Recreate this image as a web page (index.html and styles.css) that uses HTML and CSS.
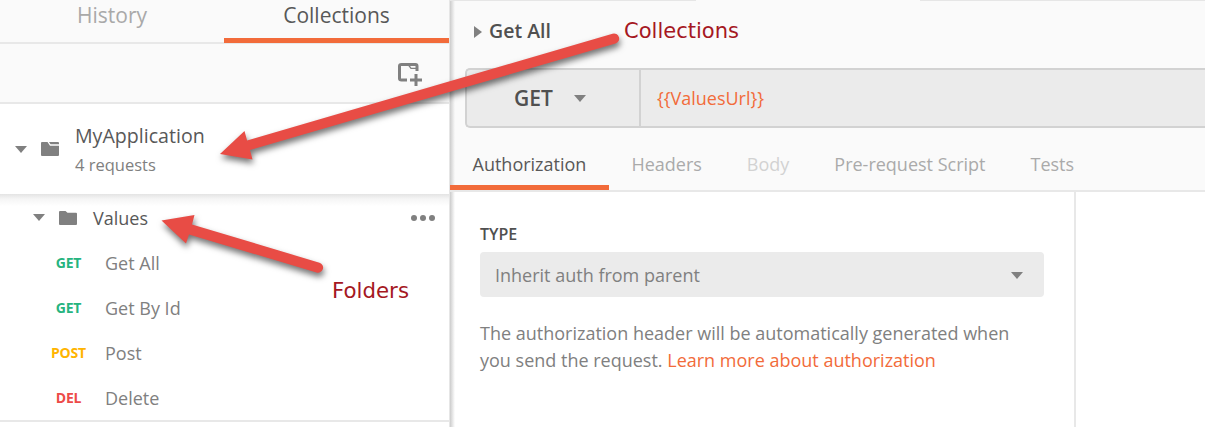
FILE: index.html
```
<!DOCTYPE html>
<html lang="en">
<head>
<meta charset="utf-8">
<title>Collections</title>
<link rel="stylesheet" href="styles.css">
</head>
<body>
<div class="app">
  <aside class="sidebar">
    <nav class="side-tabs">
      <div class="side-tab"><span>History</span></div>
      <div class="side-tab active"><span>Collections</span></div>
    </nav>
    <div class="toolbar">
      <svg width="24" height="24" viewBox="0 0 24 24" fill="none" stroke="#808080">
        <path stroke-width="3" d="M9 18H3.500Q1.500 18 1.500 16.500V4Q1.500 2.500 3.500 2.500H17.500Q19 2.500 19 4V9"/>
        <path stroke-width="1.300" d="M10.500 3L13 6.300H19"/>
        <path stroke-width="3" d="M12 18H24M18 12V24"/>
      </svg>
    </div>
    <div class="collection">
      <svg class="caret" width="12" height="7" viewBox="0 0 12 7"><path d="M0 0H12L6 7Z"/></svg>
      <svg class="folder" width="18" height="14" viewBox="0 0 18 14"><path d="M1 0H6.500L9 3.800H18V13Q18 14 17 14H1Q0 14 0 13V1Q0 0 1 0ZM8 0H17Q18 0 18 1V2.300H9.500Z"/></svg>
      <div class="collection-text">
        <div class="collection-name"><span>MyApplication</span></div>
        <div class="collection-count"><span>4 requests</span></div>
      </div>
    </div>
    <div class="tree">
      <div class="folder-row">
        <svg class="caret" width="12" height="7" viewBox="0 0 12 7"><path d="M0 0H12L6 7Z"/></svg>
        <svg class="folder" width="18" height="14" viewBox="0 0 18 14"><path d="M1 0H6.500L8.500 1.800H17Q18 1.800 18 2.800V13Q18 14 17 14H1Q0 14 0 13V1Q0 0 1 0Z"/></svg>
        <span class="folder-name">Values</span>
        <svg class="dots" width="24" height="6" viewBox="0 0 24 6"><circle cx="3" cy="3" r="3"/><circle cx="12" cy="3" r="3"/><circle cx="21" cy="3" r="3"/></svg>
      </div>
      <div class="request"><span class="method get">GET</span><span>Get All</span></div>
      <div class="request"><span class="method get">GET</span><span>Get By Id</span></div>
      <div class="request"><span class="method post">POST</span><span>Post</span></div>
      <div class="request"><span class="method del">DEL</span><span>Delete</span></div>
    </div>
  </aside>
  <main class="main">
    <div class="tab-edge"><i class="edge-left"></i><i class="edge-right"></i></div>
    <div class="title">
      <svg class="caret" width="8" height="12" viewBox="0 0 8 12"><path d="M0 0V12L8 6Z"/></svg>
      <span>Get All</span>
    </div>
    <div class="url-bar">
      <div class="verb"><span>GET</span><svg class="caret" width="12" height="7" viewBox="0 0 12 7"><path d="M0 0H12L6 7Z"/></svg></div>
      <div class="url"><span>{{ValuesUrl}}</span></div>
    </div>
    <nav class="req-tabs">
      <div class="req-tab active"><span>Authorization</span></div>
      <div class="req-tab"><span>Headers</span></div>
      <div class="req-tab disabled"><span>Body</span></div>
      <div class="req-tab"><span>Pre-request Script</span></div>
      <div class="req-tab"><span>Tests</span></div>
    </nav>
    <div class="content">
      <section class="auth">
        <div class="type-label">TYPE</div>
        <div class="select"><span>Inherit auth from parent</span><svg class="caret" width="12" height="7" viewBox="0 0 12 7"><path d="M0 0H12L6 7Z"/></svg></div>
        <p class="note">The authorization header will be automatically generated when<br>you send the request. <a>Learn more about authorization</a></p>
      </section>
    </div>
  </main>
  <svg class="annotations" width="1205" height="427" viewBox="0 0 1205 427">
    <g class="arrow">
      <path d="M220 154L244.500 131L247.100 140.400L612.500 33.700A5 5 0 0 1 615.500 43.600L250 150L252.500 159.500Z"/>
      <path d="M161.500 220.500L194.500 215L192 224.500L319.500 262.700A5 5 0 0 1 316.500 272.500L189 234.500L186 243.500Z"/>
    </g>
    <g class="callout">
      <text x="624" y="38" textLength="115" lengthAdjust="spacingAndGlyphs">Collections</text>
      <text x="332" y="298" textLength="77" lengthAdjust="spacingAndGlyphs">Folders</text>
    </g>
  </svg>
</div>
</body>
</html>
```
FILE: styles.css
```
* { box-sizing: border-box; }
body { margin: 0; font-family: "Open Sans", sans-serif; font-size: 18px; color: #808080; }
svg { display: block; flex: none; }
.app { position: relative; display: flex; width: 1205px; height: 427px; overflow: hidden; background: #fff; white-space: nowrap; }
.caret, .folder, .dots { fill: #808080; }

.sidebar { width: 450px; flex: none; border-right: 1px solid #e6e6e6; }
.side-tabs { display: flex; height: 44px; background: #fafafa; border-bottom: 2px solid #e8e8e8; }
.side-tab { width: 224px; height: 43px; padding-top: 1px; line-height: 28px; font-size: 21px; text-align: center; color: #a9a9a9; }
.side-tab.active { width: 225px; color: #585858; border-bottom: 5px solid #f26b3a; }
.toolbar { height: 60px; padding: 18px 27px 0 0; display: flex; justify-content: flex-end; background: #fafafa; border-bottom: 2px solid #e8e8e8; }
.collection { height: 90px; display: flex; align-items: center; padding-left: 15px; }
.collection .folder { margin: 0 16px 0 14px; }
.collection-text { padding-top: 2px; }
.collection-name { font-size: 19.600px; line-height: 30px; color: #585858; }
.collection-count { font-size: 16.500px; line-height: 28px; }
.tree { height: 228px; border-bottom: 2px solid #e8e8e8; background: linear-gradient(#e4e4e4, #f5f5f5 5px, #fff 12px); }
.folder-row { height: 46px; padding: 1px 14px 0 33px; display: flex; align-items: center; }
.folder-row .folder { margin: 0 16px 0 14px; }
.folder-name { color: #585858; }
.dots { margin-left: auto; }
.request { height: 45px; display: flex; align-items: center; }
.method { width: 73px; margin: 0 0 0 32px; text-align: center; font-size: 14px; letter-spacing: -0.2px; font-weight: 700; }
.get { color: #26b47f; }
.post { color: #ffb400; }
.del { color: #ed4b48; }

.main { flex: 1; background: linear-gradient(90deg, #ccc, rgba(204,204,204,0) 5px) #fafafa; }
.tab-edge { display: flex; justify-content: space-between; height: 1px; }
.edge-left { width: 246px; background: #e6e6e6; }
.edge-right { width: 285px; background: #e6e6e6; }
.title { height: 67px; padding: 0 0 6px 24px; display: flex; align-items: center; gap: 7px; font-size: 19.500px; line-height: 26px; font-weight: 600; color: #505050; }
.title span { padding-bottom: 1px; }
.url-bar { height: 60px; margin-left: 15px; display: flex; border: 2px solid #d2d2d2; border-right: 0; border-radius: 5px 0 0 5px; background: #ebebeb; }
.verb { width: 174px; display: flex; align-items: center; padding-left: 47px; gap: 21px; border-right: 2px solid #d2d2d2; font-size: 21px; font-weight: 600; color: #505050; }
.url { padding-left: 16px; line-height: 56px; color: #f26b3a; }
.req-tabs { height: 64px; padding-top: 14px; display: flex; border-bottom: 2px solid #e8e8e8; }
.req-tab { height: 48px; line-height: 44px; padding: 0 22.500px; color: #aaa; }
.req-tab.active { color: #585858; border-bottom: 5px solid #f26b3a; }
.req-tab.disabled { color: #d2d2d2; }
.content { height: 235px; background: linear-gradient(90deg, #ccc, rgba(204,204,204,0) 5px) #fff; }
.auth { width: 626px; height: 100%; padding: 31px 30px 0; border-right: 2px solid #e8e8e8; }
.type-label { height: 29px; line-height: 22px; font-size: 16px; font-weight: 600; color: #505050; }
.select { height: 45px; padding: 0 21px 0 15px; display: flex; align-items: center; justify-content: space-between; border-radius: 4px; background: #ebebeb; }
.select .caret { margin-top: 2px; }
.note { margin: 23px 0 0; line-height: 27px; }
.note a { color: #f26b3a; }

.annotations { position: absolute; inset: 0; }
.arrow { fill: #e84c45; filter: drop-shadow(1px 4px 3px rgba(0,0,0,.55)); }
.callout { fill: #a51722; font: 21.500px "DejaVu Sans", sans-serif; }
```
